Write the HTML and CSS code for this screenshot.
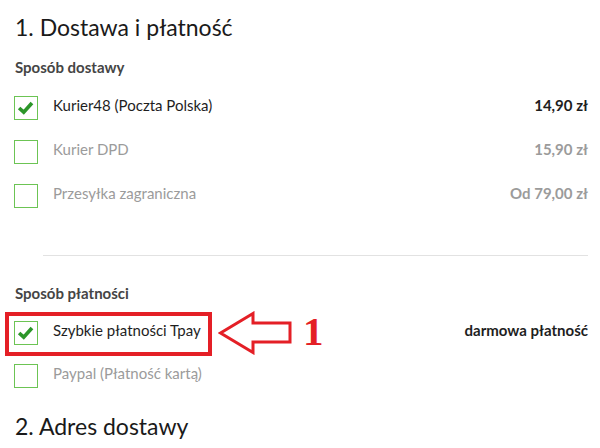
FILE: index.html
```html
<!DOCTYPE html>
<html lang="pl">
<head>
<meta charset="utf-8">
<link rel="stylesheet" href="styles.css">
</head>
<body>
<main class="page">
  <h1 class="title first">1. Dostawa i płatność</h1>

  <h2 class="sub sub-delivery">Sposób dostawy</h2>
  <ul class="options">
    <li class="opt selected">
      <span class="box"><svg viewBox="0 0 24 24" width="22" height="22"><path d="M4.5 12 L9.5 16.5 L18.5 6.5" fill="none" stroke="#2c962a" stroke-width="4" stroke-linejoin="miter"/></svg></span>
      <span class="label">Kurier48 (Poczta Polska)</span>
      <span class="price">14,90 zł</span>
    </li>
    <li class="opt">
      <span class="box"></span>
      <span class="label">Kurier DPD</span>
      <span class="price">15,90 zł</span>
    </li>
    <li class="opt">
      <span class="box"></span>
      <span class="label">Przesyłka zagraniczna</span>
      <span class="price">Od 79,00 zł</span>
    </li>
  </ul>

  <hr class="sep">

  <h2 class="sub sub-payment">Sposób płatności</h2>
  <ul class="options payment">
    <li class="opt selected annotated">
      <span class="box"><svg viewBox="0 0 24 24" width="22" height="22"><path d="M4.5 12 L9.5 16.5 L18.5 6.5" fill="none" stroke="#2c962a" stroke-width="4" stroke-linejoin="miter"/></svg></span>
      <span class="label">Szybkie płatności Tpay</span>
      <span class="price">darmowa płatność</span>
      <span class="mark-frame"></span>
      <svg class="mark-arrow" viewBox="0 0 74 44" width="74" height="44"><polygon points="2.5,22 35,2.5 35,12 72,12 72,31 35,31 35,41.5" fill="#fff" stroke="#e41f26" stroke-width="3" stroke-linejoin="miter"/></svg>
      <span class="mark-num">1</span>
    </li>
    <li class="opt">
      <span class="box"></span>
      <span class="label">Paypal (Płatność kartą)</span>
    </li>
  </ul>

  <h1 class="title second">2. Adres dostawy</h1>
</main>
</body>
</html>
```

FILE: styles.css
```css
html, body {
  margin: 0;
  padding: 0;
  background: #fff;
}

body {
  font-family: Lato, "Noto Sans", sans-serif;
  color: #222;
}

.page {
  width: 600px;
  height: 448px;
  box-sizing: border-box;
  padding: 0 12px 0 15px;
  overflow: hidden;
}

.title {
  font-size: 23px;
  line-height: 30px;
  font-weight: 400;
  color: #1a1a1a;
  margin: 0;
}

.title.first {
  margin-top: 12px;
}

.title.second {
  margin-top: 23px;
}

.sub {
  font-size: 15px;
  line-height: 18px;
  font-weight: 700;
  color: #454545;
  margin: 0;
}

.sub-delivery {
  margin-top: 16px;
}

.sub-payment {
  margin-top: 28px;
}

.options {
  list-style: none;
  margin: 20px 0 0;
  padding: 0;
  display: flex;
  flex-direction: column;
  gap: 20px;
}

.options.payment {
  margin-top: 19px;
  gap: 19px;
}

.opt {
  display: flex;
  align-items: flex-start;
  height: 24px;
  font-size: 15px;
  line-height: 18px;
  color: #9b9b9b;
}

.opt.selected {
  color: #1e1e1e;
}

.box {
  width: 24px;
  height: 24px;
  box-sizing: border-box;
  border: 1px solid #6cc454;
  margin-left: -1px;
  margin-right: 15px;
  display: flex;
  align-items: center;
  justify-content: center;
  flex: none;
}

.box svg {
  display: block;
}

.label {
  flex: 1;
}

.price {
  font-weight: 700;
}

.sep {
  border: 0;
  height: 1px;
  background: #e2e2e2;
  margin: 47px 0 0 28px;
}

.annotated {
  position: relative;
}

.mark-frame {
  position: absolute;
  left: -10px;
  top: -9px;
  width: 207px;
  height: 44px;
  box-sizing: border-box;
  border: 4px solid #e41f26;
}

.mark-arrow {
  position: absolute;
  left: 203px;
  top: -10px;
}

.mark-num {
  position: absolute;
  left: 288px;
  top: -10px;
  font-family: "Liberation Serif", serif;
  font-weight: 700;
  font-size: 41px;
  line-height: 41px;
  color: #e41f26;
}
```
